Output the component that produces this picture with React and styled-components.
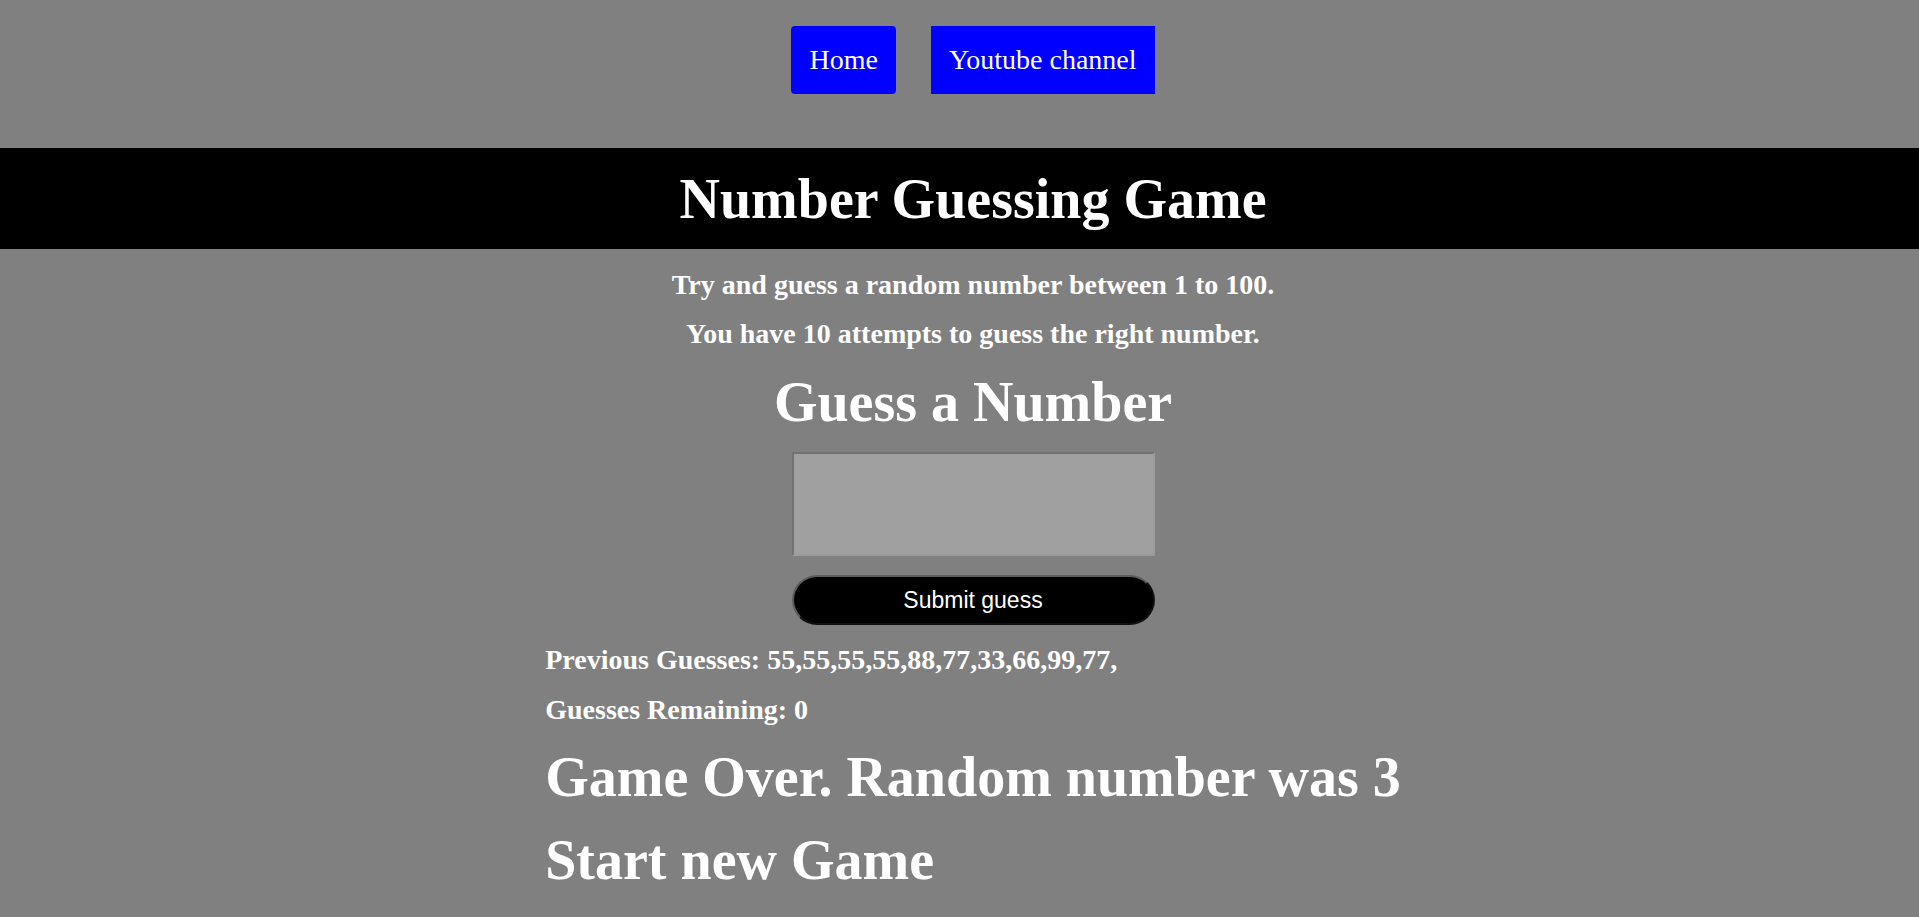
import React, { useState } from "react";
import styled, { createGlobalStyle } from "styled-components";

const GlobalStyle = createGlobalStyle`
    body {
        margin: 0;
        background: #808080;
        font-family: "Liberation Serif", "Times New Roman", serif;
        color: white;
    }
`;

const Navbar = styled.nav`
    display: flex;
    justify-content: center;
    gap: 35px;
    padding: 26px 0 54px 27px;
`;

const NavLink = styled.a`
    display: block;
    background: #0000ff;
    color: white;
    text-decoration: none;
    font-size: 28px;
    line-height: 32px;
    padding: 18px;
    border-radius: ${(p) => (p.$rounded ? "4px" : "0")};
`;

const TitleBar = styled.header`
    background: black;
    padding: 20px 0 19px 27px;
    text-align: center;

    & > h1 {
        margin: 0;
        font-size: 56px;
        line-height: 62px;
        font-weight: bold;
    }
`;

const Main = styled.main`
    display: flex;
    flex-direction: column;
    align-items: center;
    padding: 20px 0 24px 27px;
`;

const Info = styled.p`
    margin: 0 0 18px;
    font-size: 28px;
    line-height: 31px;
    font-weight: bold;
    text-align: center;
`;

const SubTitle = styled.h2`
    margin: 4px 0 19px;
    font-size: 56px;
    line-height: 62px;
    font-weight: bold;
`;

const GuessInput = styled.input`
    box-sizing: border-box;
    width: 363px;
    height: 104px;
    margin: 0 0 19px;
    background: #a0a0a0;
    border-style: solid;
    border-width: 2px;
    border-color: #727272 #9a9a9a #9a9a9a #727272;
    font-size: 28px;
    outline: none;
`;

const SubmitButton = styled.button`
    box-sizing: border-box;
    width: 363px;
    height: 50px;
    margin: 0 0 19px;
    border-radius: 25px;
    background: black;
    color: white;
    border-style: solid;
    border-width: 2px;
    border-color: #5c5c5c #111 #111 #5c5c5c;
    font-family: "Liberation Sans", Arial, sans-serif;
    font-size: 23px;
`;

const Results = styled.div`
    width: fit-content;
    text-align: left;
`;

const Stat = styled.p`
    margin: 0 0 ${(p) => (p.$last ? 0 : 19)}px;
    font-size: 28px;
    line-height: 31px;
    font-weight: bold;
`;

const BigLine = styled.div`
    margin: 21px 0 0;
    font-size: 56px;
    line-height: 62px;
    font-weight: bold;
`;

function App() {
    const [guess, setGuess] = useState("");
    const guesses = [55, 55, 55, 55, 88, 77, 33, 66, 99, 77];

    return (
        <div>
            <GlobalStyle />
            <Navbar>
                <NavLink href="#" $rounded>Home</NavLink>
                <NavLink href="#">Youtube channel</NavLink>
            </Navbar>
            <TitleBar>
                <h1>Number Guessing Game</h1>
            </TitleBar>
            <Main>
                <Info>Try and guess a random number between 1 to 100.</Info>
                <Info>You have 10 attempts to guess the right number.</Info>
                <SubTitle>Guess a Number</SubTitle>
                <GuessInput type="text" value={guess} onChange={(e) => setGuess(e.target.value)} />
                <SubmitButton>Submit guess</SubmitButton>
                <Results>
                    <Stat>Previous Guesses: {guesses.map((g) => g + ",").join("")}</Stat>
                    <Stat $last>Guesses Remaining: 0</Stat>
                    <BigLine>Game Over. Random number was 3</BigLine>
                    <BigLine>Start new Game</BigLine>
                </Results>
            </Main>
        </div>
    );
}

export default App;
